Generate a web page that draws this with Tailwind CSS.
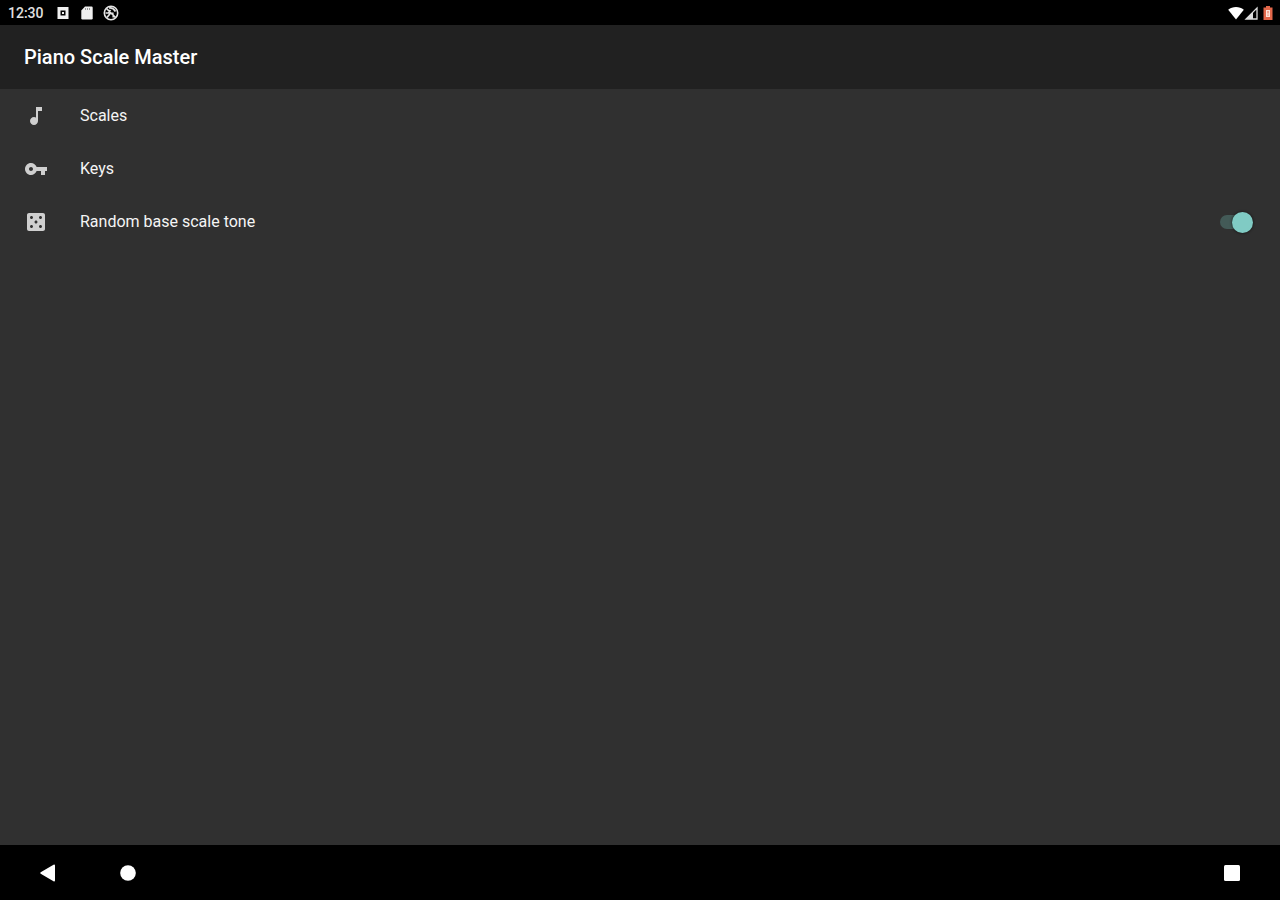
<!DOCTYPE html>
<html lang="en">
<head>
  <meta charset="UTF-8">
  <meta name="viewport" content="width=device-width, initial-scale=1.0">
  <title>Piano Scale Master</title>
  <script src="https://cdn.jsdelivr.net/npm/@tailwindcss/browser@4"></script>
</head>
<body class="bg-[#303030] text-white font-[Roboto,sans-serif] min-h-screen flex flex-col">
  <!-- Status bar -->
  <div class="h-[25px] bg-black flex items-center justify-between pl-2 pr-1">
    <div class="flex items-center gap-2">
      <span class="w-[39px] text-sm font-medium text-[#e0e0e0]">12:30</span>
      <svg class="size-4" viewBox="0 0 16 16"><path fill="#f0f0f0" fill-rule="evenodd" d="M2.500 2h11v12h-11zM5.500 5.500v5h5v-5z"/><path fill="#f0f0f0" d="M7 7h2v2H7z"/></svg>
      <svg class="size-4" viewBox="0 0 16 16"><path fill="#f0f0f0" d="M6 1.500h6.500a1.200 1.200 0 0 1 1.200 1.200v10.600a1.200 1.200 0 0 1-1.200 1.200h-9a1.200 1.200 0 0 1-1.200-1.200V5.500z"/><path stroke="#999" stroke-width="1" d="M6.500 3v2M8.500 3v2M10.500 3v2"/></svg>
      <svg class="size-4" viewBox="0 0 16 16" fill="none" stroke="#e4e4e4"><circle cx="8" cy="8" r="6.700" stroke-width="1.600"/><path stroke-width="1.700" d="M3.500 3.500l9 9M4 12.500l4-5M6 3c3-.5 5 1 6.500 3.500M2.500 8h3l2-3M9.500 7.500l1 5"/></svg>
    </div>
    <div class="flex items-center">
      <svg class="size-4" viewBox="0 0 16 16"><path fill="#fff" d="M8 14.500L.2 4.800C4.500 1.200 11.500 1.200 15.800 4.800z"/></svg>
      <svg class="size-4" viewBox="0 0 16 16"><path fill="none" stroke="#ddd" stroke-width="1.300" d="M13 3v11H2z"/><path fill="#ddd" d="M9 7v7H2z"/></svg>
      <svg class="size-4" viewBox="0 0 16 16"><path fill="#e2674a" d="M6 1h4v1.500h2.500V15h-9V2.500H6z"/><path fill="#ffe3d8" d="M6 5h4v7H6z"/><path fill="#e2674a" d="M7.500 6h1v2.500h-1zM7.500 9.500h1v1.300h-1z"/></svg>
    </div>
  </div>

  <header class="h-16 bg-[#212121] px-6 flex items-center">
    <h1 class="text-xl font-medium">Piano Scale Master</h1>
  </header>

  <!-- Settings -->
  <main class="flex-grow text-base text-[#f5f5f5]">
    <ul>
      <li>
        <a href="#scales" class="h-[53px] px-6 flex items-center gap-8">
          <svg class="size-6 text-[#cfcfcf]" viewBox="0 0 24 24" fill="currentColor"><path d="M12 3v10.550c-.59-.34-1.270-.55-2-.55-2.210 0-4 1.790-4 4s1.790 4 4 4 4-1.790 4-4V7h4V3h-6z"/></svg>
          Scales
        </a>
      </li>
      <li>
        <a href="#keys" class="h-[53px] px-6 flex items-center gap-8">
          <svg class="size-6 text-[#cfcfcf]" viewBox="0 0 24 24" fill="currentColor"><path d="M12.650 10C11.830 7.670 9.610 6 7 6c-3.310 0-6 2.690-6 6s2.690 6 6 6c2.610 0 4.830-1.670 5.650-4H17v4h4v-4h2v-4H12.650zM7 14c-1.100 0-2-.9-2-2s.9-2 2-2 2 .9 2 2-.9 2-2 2z"/></svg>
          Keys
        </a>
      </li>
      <li>
        <label for="random-tone" class="h-[54px] px-6 flex items-center gap-8">
          <svg class="size-6 text-[#cfcfcf]" viewBox="0 0 24 24" fill="currentColor"><path d="M19 3H5c-1.100 0-2 .9-2 2v14c0 1.100.9 2 2 2h14c1.100 0 2-.9 2-2V5c0-1.100-.9-2-2-2zM7.500 18c-.83 0-1.500-.67-1.500-1.500S6.670 15 7.500 15s1.500.67 1.500 1.500S8.330 18 7.500 18zm0-9C6.670 9 6 8.330 6 7.500S6.670 6 7.500 6 9 6.670 9 7.500 8.330 9 7.500 9zm4.500 4.500c-.83 0-1.500-.67-1.500-1.500s.67-1.500 1.500-1.500 1.500.67 1.500 1.500-.67 1.500-1.500 1.500zm4.500 4.500c-.83 0-1.500-.67-1.500-1.500s.67-1.500 1.500-1.500 1.500.67 1.500 1.500-.67 1.500-1.500 1.500zm0-9c-.83 0-1.500-.67-1.500-1.500S15.670 6 16.500 6s1.500.67 1.500 1.500S17.330 9 16.500 9z"/></svg>
          <span class="flex-grow">Random base scale tone</span>
          <input id="random-tone" type="checkbox" role="switch" checked class="appearance-none mr-[2px] w-[34px] h-5 flex items-center rounded-full before:content-[''] before:w-6 before:h-[14px] before:rounded-l-full before:bg-[#435a57] after:content-[''] after:shrink-0 after:size-[21px] after:-ml-3 after:rounded-full after:bg-[#80cbc4] after:shadow-[0_0_2px_1px_rgba(0,0,0,0.3)]">
        </label>
      </li>
    </ul>
  </main>

  <!-- Navigation bar -->
  <nav class="h-[55px] bg-black px-9 flex items-center gap-14">
    <button aria-label="Back"><svg class="size-6" viewBox="0 0 24 24" fill="#fff"><path d="M19 4.500v15a1 1 0 0 1-1.500.7L4.700 12.800a1 1 0 0 1 0-1.600L17.500 3.800a1 1 0 0 1 1.500.7z"/></svg></button>
    <button aria-label="Home"><svg class="size-6" viewBox="0 0 24 24" fill="#fff"><circle cx="12" cy="12" r="7.800"/></svg></button>
    <button aria-label="Recent apps" class="ml-auto"><svg class="size-6" viewBox="0 0 24 24" fill="#fff"><rect x="4" y="4" width="16" height="16" rx="1.500"/></svg></button>
  </nav>
</body>
</html>
